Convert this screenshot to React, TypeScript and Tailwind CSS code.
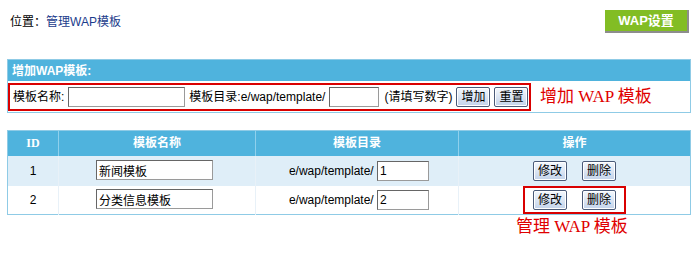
import React from "react";

const rows = [
  { id: 1, name: "新闻模板", dir: "1" },
  { id: 2, name: "分类信息模板", dir: "2" },
];

const Btn = ({ children }: { children: React.ReactNode }) => (
  <button className="h-[20px] px-[4px] text-[12px] leading-none text-black border border-[#4a5a78] rounded-[2px] bg-gradient-to-b from-[#f4f8fd] to-[#c3d3ea] shadow-[inset_0_0_0_1px_#ffffff]">
    {children}
  </button>
);

export default function App() {
  return (
    <div
      className="w-[700px] h-[268px] bg-white text-[12px] text-black"
      style={{ fontFamily: '"Liberation Sans", "Noto Sans CJK SC", sans-serif' }}
    >
      {/* top bar */}
      <div className="flex items-start justify-between pl-[10px] pr-[11px] pt-[10px] h-[59px]">
        <div className="mt-[3px]">
          位置：<span className="text-[#1b3c8c]">管理WAP模板</span>
        </div>
        <div className="w-[84px] h-[23px] flex items-center justify-center bg-[#82bd24] border-r-2 border-b-2 border-[#8d8d8d] text-white font-bold text-[13px]">
          WAP设置
        </div>
      </div>

      {/* add panel */}
      <div className="ml-[7px] w-[684px] border border-[#8fcbe6]">
        <div className="h-[21px] bg-[#4fb3dd] text-white font-bold pl-[4px] flex items-center">
          增加WAP模板:
        </div>
        <div className="h-[31px] flex items-center">
          <div className="h-[28px] w-[523px] border-2 border-[#d90000] flex items-center pl-[3px] gap-[4px] whitespace-nowrap">
            <span>模板名称:</span>
            <input className="w-[117px] h-[20px] border border-[#9a9a9a] border-t-[#666] border-l-[#666]" />
            <span>模板目录:e/wap/template/</span>
            <input className="w-[50px] h-[20px] border border-[#9a9a9a] border-t-[#666] border-l-[#666]" />
            <span className="ml-[1px]">(请填写数字)</span>
            <Btn>增加</Btn>
            <Btn>重置</Btn>
          </div>
          <span
            className="ml-[9px] text-[#e00000] text-[17px] leading-none"
            style={{ fontFamily: '"Liberation Serif", "Noto Sans CJK SC", serif' }}
          >
            增加 WAP 模板
          </span>
        </div>
      </div>

      {/* list table */}
      <table className="ml-[7px] mt-[17px] w-[684px] border border-[#8fcbe6] border-collapse table-fixed">
        <colgroup>
          <col className="w-[51px]" />
          <col className="w-[197px]" />
          <col className="w-[203px]" />
          <col />
        </colgroup>
        <thead>
          <tr className="h-[25px] bg-[#4fb3dd] text-white font-bold">
            <th className="border-r border-[#8fd0ec]" style={{ fontFamily: '"Liberation Serif", serif' }}>ID</th>
            <th className="border-r border-[#8fd0ec]">模板名称</th>
            <th className="border-r border-[#8fd0ec]">模板目录</th>
            <th>操作</th>
          </tr>
        </thead>
        <tbody>
          {rows.map((r, i) => (
            <tr key={r.id} className={i === 0 ? "h-[30px] bg-[#dfeef8]" : "h-[28px] bg-white"}>
              <td className="text-center border-r border-[#e8f1f8]">{r.id}</td>
              <td className="border-r border-[#e8f1f8] pl-[37px]">
                <input
                  defaultValue={r.name}
                  className="w-[117px] h-[20px] px-[2px] bg-white border border-[#9a9a9a] border-t-[#666] border-l-[#666] text-[12px]"
                />
              </td>
              <td className="border-r border-[#e8f1f8] text-right pr-[29px] whitespace-nowrap">
                e/wap/template/{" "}
                <input
                  defaultValue={r.dir}
                  className="w-[52px] h-[20px] px-[2px] bg-white border border-[#9a9a9a] border-t-[#666] border-l-[#666] text-[12px]"
                />
              </td>
              <td>
                <div className="flex justify-center">
                  <div
                    className={
                      "relative flex items-center gap-[15px] h-[28px] px-[8px] border-2 " +
                      (i === 1 ? "border-[#d90000]" : "border-transparent")
                    }
                  >
                    <Btn>修改</Btn>
                    <Btn>删除</Btn>
                    {i === 1 && (
                      <span
                        className="absolute left-[-9px] top-[30px] whitespace-nowrap text-[#e00000] text-[17px] leading-none"
                        style={{ fontFamily: '"Liberation Serif", "Noto Sans CJK SC", serif' }}
                      >
                        管理 WAP 模板
                      </span>
                    )}
                  </div>
                </div>
              </td>
            </tr>
          ))}
        </tbody>
      </table>
    </div>
  );
}
